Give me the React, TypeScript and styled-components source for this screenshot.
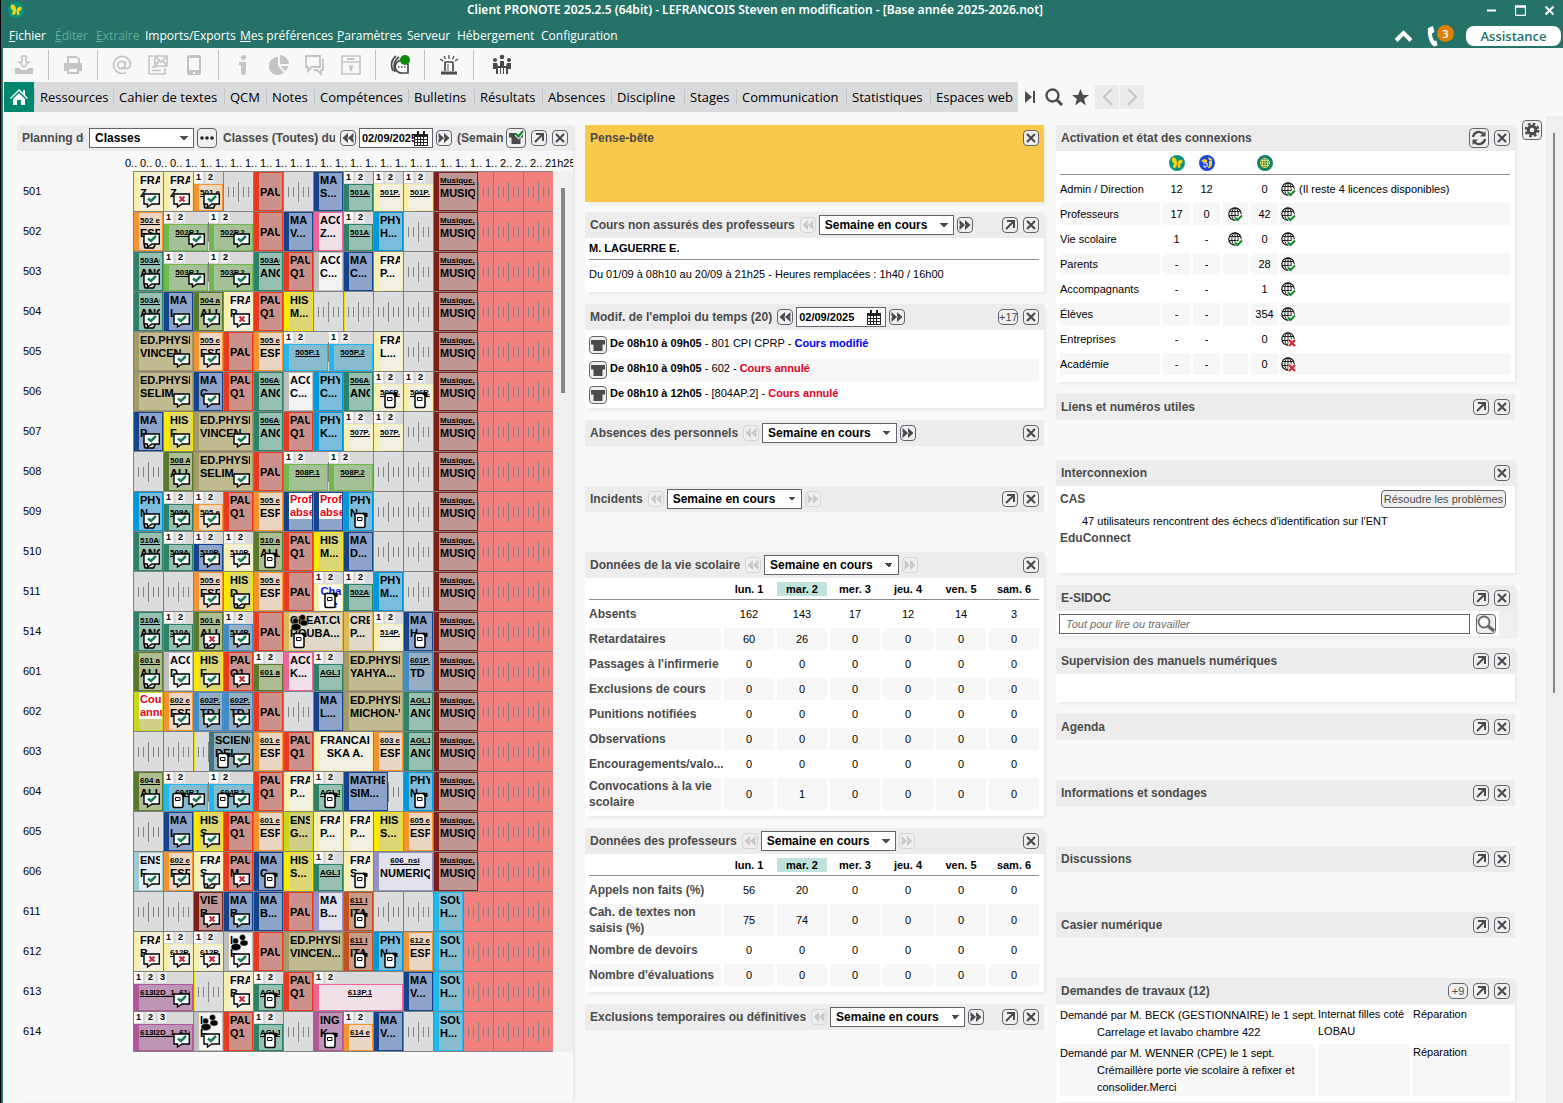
import React from "react";
import styled, { createGlobalStyle, css } from "styled-components";

const SANS = `"Liberation Sans", Arial, sans-serif`;
const UI = `"Open Sans", "Noto Sans", sans-serif`;
const TEAL = "#247268";
const INK = "#4b4b4b";
const OFF = "#c4c4c4";
const EDGE = "#62636d";

const GlobalStyle = createGlobalStyle`
  *, *::before, *::after { box-sizing: border-box; }
  body { margin: 0; border-left: 1px solid #000; background: #f8f8f8; font: 11px/17px ${SANS}; color: #000; }
  button, input, select { font: inherit; color: inherit; margin: 0; }
  button { padding: 0; border: 0; background: none; }
  svg { display: block; flex: none; }
`;

/* ---------- window frame ---------- */

const Frame = styled.div`
  display: flex;
  flex-direction: column;
  min-height: 100vh;
  border-left: 2px solid ${TEAL};
  background: #f8f8f8;
`;
const Banner = styled.header`
  background: ${TEAL};
  color: #fff;
  font-family: ${UI};
`;
const TitleBar = styled.div`
  display: flex;
  align-items: center;
  height: 20px;
  padding: 0 8px 0 5px;
`;
const Title = styled.h1`
  flex: 1;
  margin: 0;
  text-align: center;
  font: 600 12px/20px "Noto Sans", sans-serif;
  white-space: nowrap;
`;
const WindowButtons = styled.div`
  display: flex;
  gap: 18px;
`;
const MenuBar = styled.nav`
  display: flex;
  align-items: center;
  height: 28px;
  padding: 4px 2px 0 6px;
  font-size: 12px;
`;
const MenuItem = styled.button<{ $w: number }>`
  width: ${(p) => p.$w}px;
  text-align: left;
  white-space: nowrap;
  line-height: 20px;
  &:disabled { color: #5fae9d; }
  &::first-letter { text-decoration: underline; }
`;
const PlainItem = styled(MenuItem)`
  &::first-letter { text-decoration: none; }
`;
const BannerRight = styled.div`
  display: flex;
  align-items: center;
  margin-left: auto;
`;
const Phone = styled.div`
  position: relative;
  width: 27px;
  height: 22px;
  margin: 0 12px 0 14px;
`;
const Badge = styled.span`
  position: absolute;
  right: 0;
  top: 0;
  width: 17px;
  height: 17px;
  border-radius: 50%;
  background: #df8000;
  font: 600 11px/17px ${UI};
  text-align: center;
`;
const Assist = styled.button`
  width: 95px;
  height: 20px;
  border-radius: 8px;
  background: #fff;
  color: ${TEAL};
  font: 600 13px/20px ${UI};
`;

const Toolbar = styled.div`
  display: flex;
  align-items: center;
  height: 34px;
`;
const ToolGroup = styled.div`
  display: flex;
  align-items: center;
  gap: 16px;
  height: 30px;
  padding: 0 14px;
  border-left: 1px solid #c4c4c4;
  &:first-child { border: 0; padding-left: 11px; }
  &:last-child { padding-left: 18px; }
`;
const Tool = styled.button`
  width: 20px;
  height: 22px;
  color: ${INK};
  &:disabled { color: ${OFF}; }
`;

const TabLine = styled.div`
  display: flex;
  align-items: center;
  height: 30px;
  padding-left: 1px;
`;
const Tabs = styled.nav`
  display: flex;
  height: 30px;
  background: #d9dadc;
  font: 13px/30px ${UI};
`;
const Home = styled.button`
  display: grid;
  place-items: center;
  width: 30px;
  height: 30px;
  background: #00856f;
  color: #fff;
`;
const Tab = styled.button<{ $w: number }>`
  width: ${(p) => p.$w}px;
  padding-left: 6px;
  text-align: left;
  white-space: nowrap;
  line-height: 30px;
  background: linear-gradient(#c4c4c6, #c4c4c6) left center / 1px 16px no-repeat;
`;
const TabTools = styled.div`
  display: flex;
  align-items: center;
  gap: 9px;
  padding-left: 7px;
  color: ${INK};
`;
const Pager = styled.div`
  display: flex;
  gap: 1px;
  margin-left: -3px;
  button {
    display: grid;
    place-items: center;
    width: 24px;
    height: 24px;
    background: #ebebeb;
    color: ${OFF};
  }
`;

/* ---------- dashboard ---------- */

const Work = styled.div`
  display: flex;
  flex: 1;
`;
const Board = styled.main`
  flex: 1;
  min-width: 0;
  display: grid;
  grid-template-columns: 556px minmax(0, 1fr) minmax(0, 1fr);
  gap: 12px;
  padding: 13px 7px 3px 14px;
`;
const Column = styled.div`
  min-width: 0;
`;
const Widget = styled.section<{ $flat?: boolean }>`
  margin-bottom: 12px;
  &:last-child { margin-bottom: 0; }
  ${(p) => !p.$flat && css`box-shadow: 3px 3px 3px -1px #e9e9e9;`}
`;
const Head = styled.header`
  display: flex;
  align-items: center;
  gap: 3px;
  height: 26px;
  padding: 0 5px;
  background: #ececec;
`;
const HeadTitle = styled.h2<{ $w?: number }>`
  margin: 0 2px 0 0;
  font: bold 12px/17px ${SANS};
  color: ${INK};
  white-space: nowrap;
  overflow: hidden;
  ${(p) => p.$w && css`width: ${p.$w}px;`}
`;
const HeadFill = styled.span`
  flex: 1;
  min-width: 0;
  padding-left: 2px;
  font: bold 12px/17px ${SANS};
  color: ${INK};
  overflow: hidden;
  white-space: nowrap;
`;
const HeadActions = styled.div`
  display: flex;
  align-items: center;
  gap: 5px;
`;
const Square = styled.button<{ $s?: number }>`
  display: grid;
  place-items: center;
  flex: none;
  width: ${(p) => p.$s || 16}px;
  height: ${(p) => p.$s || 16}px;
  border: 1px solid ${EDGE};
  border-radius: 4px;
  background: #efefef;
  color: ${INK};
  &:disabled { border-color: #d5d5d5; color: #c8c8c8; }
`;
const Counter = styled.button`
  height: 16px;
  width: 20px;
  border: 1px solid ${EDGE};
  border-radius: 5px;
  background: #efefef;
  color: ${INK};
  font: 11px/14px ${SANS};
`;
const Field = styled.div<{ $w: number }>`
  display: flex;
  align-items: center;
  flex: none;
  width: ${(p) => p.$w}px;
  height: 20px;
  padding-right: 4px;
  border: 1px solid ${EDGE};
  background: #fff;
`;
const DateBox = styled.input`
  flex: 1;
  min-width: 0;
  height: 18px;
  padding: 0 0 0 2px;
  border: 0;
  background: none;
  font: bold 11px/18px ${SANS};
  outline: 0;
`;
const Picker = styled.select<{ $w: number }>`
  appearance: none;
  flex: none;
  width: ${(p) => p.$w}px;
  height: 20px;
  padding: 0 0 0 5px;
  border: 1px solid ${EDGE};
  border-radius: 0;
  font: bold 12px/18px ${SANS};
  background:
    linear-gradient(to top right, transparent 50%, ${INK} 50%) right 9px center / 4px 4px no-repeat,
    linear-gradient(to top left, transparent 50%, ${INK} 50%) right 5px center / 4px 4px no-repeat,
    #fff;
  background-position: right 9px center, right 5px center, 0 0;
`;
const Body = styled.div<{ $h?: number; $clear?: boolean }>`
  background: ${(p) => (p.$clear ? "transparent" : "#fff")};
  padding: 0 5px 0 4px;
  ${(p) => p.$h && css`min-height: ${p.$h}px;`}
`;
const Note = styled(Widget)`
  min-height: 77px;
  margin-bottom: 10px;
  background: #f9ca4a;
  ${Head} { background: none; }
`;
const Teacher = styled.h3`
  margin: 0;
  font: bold 11px/21px ${SANS};
  border-bottom: 1px solid #8c8c8c;
`;
const Line = styled.p`
  margin: 0;
  line-height: 29px;
`;
const Changes = styled.ul`
  list-style: none;
  margin: 0;
  padding: 1px 0 0;
  li {
    display: flex;
    align-items: center;
    gap: 3px;
    height: 25px;
    padding-top: 3px;
    > span { flex: 1; height: 22px; line-height: 18px; }
  }
  li:nth-child(even) > span { background: #f7f7f7; }
`;
const Status = styled.b<{ $c: string }>`
  color: ${(p) => p.$c};
`;

const Table = styled.table`
  width: 100%;
  table-layout: fixed;
  border-collapse: separate;
  border-spacing: 0;
  th, td {
    padding: 0;
    text-align: center;
    border: 0 solid transparent;
    background-clip: padding-box;
  }
  thead th { border-bottom: 1px solid #8c8c8c; font-size: 11px; }
  tbody th, tbody td { height: 25px; border-width: 3px 3px 0 0; line-height: 16px; }
  tbody td:last-child { border-right-width: 0; }
  tbody th { text-align: left; }
  tbody tr:nth-child(even) > * { background-color: #f7f7f7; }
  svg { margin: 0 auto; }
`;
const Day = styled.span<{ $on: boolean }>`
  display: block;
  margin-right: 3px;
  line-height: 14px;
  background: ${(p) => (p.$on ? "#bfe3dc" : "transparent")};
`;
const DataTable = styled(Table)`
  thead th { height: 22px; }
  thead th:first-child { width: 135px; }
  thead th:last-child { width: 50px; }
  thead th:last-child ${Day} { margin-right: 0; }
  tbody th { font-size: 12px; color: ${INK}; }
`;
const StateTable = styled(Table)`
  thead th { height: 24px; padding-right: 3px; }
  tbody th { font-weight: normal; }
  tbody td:last-child { text-align: left; }
`;
const Inline = styled.span`
  display: flex;
  align-items: center;
  gap: 3px;
  white-space: nowrap;
  svg { margin: 0; }
`;
const JobTable = styled(Table)`
  margin-top: 2px;
  tbody td { vertical-align: top; text-align: left; line-height: 17px; border-width: 0 3px 3px 0; }
  tbody td:first-child { padding-top: 1px; white-space: nowrap; }
  tbody td p { margin: 0; padding-left: 37px; white-space: normal; }
`;
const Cas = styled.div`
  display: flex;
  align-items: center;
  justify-content: space-between;
  padding: 4px 4px 0 0;
  color: ${INK};
  b { font-size: 12px; }
`;
const Solve = styled.button`
  height: 18px;
  padding: 0 2px;
  border: 1px solid ${EDGE};
  border-radius: 4px;
  background: #efefef;
  color: ${INK};
`;
const Detail = styled.p`
  margin: 5px 0 0 22px;
`;
const Group = styled.b`
  display: block;
  color: ${INK};
  font-size: 12px;
`;
const SearchRow = styled.form`
  display: flex;
  align-items: center;
  gap: 6px;
  height: 25px;
  padding: 0 19px 0 3px;
  background: linear-gradient(#efefef, #efefef) right / 16px 100% no-repeat #fff;
`;
const SearchBox = styled.input`
  flex: 1;
  min-width: 0;
  height: 20px;
  padding: 0 6px;
  border: 1px solid ${EDGE};
  background: #fff;
  font: italic 11px/18px ${SANS};
  &::placeholder { color: #6b6b6b; opacity: 1; }
`;
const Settings = styled.aside`
  padding: 8px 4px 0 0;
`;
const Track = styled.div`
  width: 17px;
  margin-top: 4px;
  padding: 17px 0 0 7px;
  background: #eee;
`;
const Thumb = styled.div<{ $w: number; $h: number }>`
  width: ${(p) => p.$w}px;
  height: ${(p) => p.$h}px;
  background: #868686;
`;

/* ---------- timetable ---------- */

const Planning = styled.section`
  box-shadow: 3px 0 3px -1px #e6e6e6;
`;
const Hours = styled.div`
  display: flex;
  height: 20px;
  padding: 4px 0 0 108px;
  line-height: 17px;
  overflow: hidden;
  span { flex: none; width: 15px; white-space: nowrap; }
`;
const Sheet = styled.div`
  display: flex;
`;
const Names = styled.div`
  width: 116px;
  padding-left: 6px;
  line-height: 40px;
`;
const Lanes = styled.div`
  width: 420px;
  border-bottom: 1px solid #828282;
`;
const SideTrack = styled.div`
  flex: 1;
  padding: 17px 0 0 8px;
  background: #efefef;
`;
const tick = (x: number, tall?: boolean) =>
  `linear-gradient(#828282, #828282) ${x}px ${tall ? 10 : 15}px / 1px ${tall ? 20 : 10}px no-repeat`;
const Slot = styled.div<{ $late: boolean; $mark: boolean }>`
  grid-row: 1;
  border-left: 1px solid #828282;
  background: ${[4, 9, 19, 24].map((x) => tick(x)).join(",")}, ${tick(14, true)},
    ${(p) => (p.$mark ? "linear-gradient(90deg, #f5d800 1px, transparent 1px)," : "")}
    ${(p) => (p.$late ? "#f2807e" : "#dbdcde")};
`;
const Lane = styled.div`
  display: grid;
  grid-template-columns: repeat(28, 15px);
  grid-template-rows: 39px;
  border-top: 1px solid #828282;
`;
const Place = styled.div<{ $from: number; $span: number; $tagged: boolean }>`
  grid-row: 1;
  grid-column: ${(p) => p.$from * 2 + 1} / span ${(p) => p.$span * 2};
  display: flex;
  flex-direction: column;
  position: relative;
  min-width: 0;
  margin-left: 1px;
  ${(p) => p.$tagged && css`background: #d9d9d9;`}
`;
const Tags = styled.div`
  display: flex;
  gap: 3px;
  height: 12px;
  padding-bottom: 1px;
  span {
    width: 9px;
    background: #ececec;
    font: bold 9px/11px ${SANS};
    text-align: center;
  }
  span:first-child { background: #fff; }
`;
const Lesson = styled.div<{ $edge: string; $fill: string; $center: boolean; $mid: boolean; $note?: string }>`
  flex: 1;
  min-height: 0;
  display: flex;
  flex-direction: column;
  justify-content: ${(p) => (p.$mid ? "center" : "flex-start")};
  padding: 1px 2px 0 1px;
  border: 1px solid ${(p) => p.$edge};
  border-left-width: 5px;
  background: ${(p) => p.$fill};
  font: bold 11px/13px ${SANS};
  text-align: ${(p) => (p.$center ? "center" : "left")};
  overflow: hidden;
  ${(p) => p.$note && css`
    padding: 0;
    color: ${p.$note};
    div { background: #fff; padding-left: 1px; }
  `}
`;
const Row = styled.div<{ $code: boolean }>`
  flex: none;
  overflow: hidden;
  white-space: nowrap;
  ${(p) => p.$code && css`font-size: 8px; text-decoration: underline;`}
`;
const Marks = styled.div<{ $left: boolean }>`
  position: absolute;
  bottom: 2px;
  display: flex;
  ${(p) => (p.$left ? css`left: 9px;` : css`right: 3px;`)}
`;
const Crowd = styled.div`
  position: absolute;
  left: 6px;
  top: 2px;
`;

/* ---------- drawings ---------- */

const Cross = () => (
  <svg width="12" height="12" viewBox="0 0 12 12" stroke="currentColor" strokeWidth="2.2"><path d="M2 2l8 8M10 2l-8 8" /></svg>
);
const Out = () => (
  <svg width="12" height="12" viewBox="0 0 12 12" fill="none" stroke="currentColor" strokeWidth="2"><path d="M3 2h7v7M9.500 2.500L2 10" /></svg>
);
const Double = ({ back }: { back?: boolean }) => (
  <svg width="12" height="12" viewBox="0 0 12 12" fill="currentColor">
    {back
      ? <path d="M6 1v4L5 6l1 1v4L.5 6zM11.500 1v4l-1 1 1 1v4L6 6z" />
      : <path d="M6 1v4l1 1-1 1v4l5.500-5zM.5 1v4l1 1-1 1v4L6 6z" />}
  </svg>
);
const Calendar = () => (
  <svg width="14" height="15" viewBox="0 0 14 15" shapeRendering="crispEdges"><path d="M0 3h14v12H0z" fill="#222" />
    <path d="M3 0h2v3H3zM9 0h2v3H9z" fill="#222" />
    <path d="M1 6h2v2H1zM4 6h2v2H4zM7 6h2v2H7zM10 6h3v2h-3zM1 9h2v2H1zM4 9h2v2H4zM7 9h2v2H7zM10 9h3v2h-3zM1 12h2v2H1zM4 12h2v2H4zM7 12h2v2H7zM10 12h3v2h-3z" fill="#fff" /></svg>
);
const Shirt = ({ ok }: { ok?: boolean }) => (
  <svg width="16" height="16" viewBox="0 0 16 16"><path d="M1 3h14v4.500h-2.500V14h-9V7.500H1z" fill={INK} />
    {ok && <path d="M8 4l2.500 2.500L15 1" fill="none" stroke="#efefef" strokeWidth="4" />}
    {ok && <path d="M8 4l2.500 2.500L15 1" fill="none" stroke="#0b8a1e" strokeWidth="2" />}</svg>
);
const Refresh = () => (
  <svg width="16" height="16" viewBox="0 0 16 16" fill="none" stroke={INK} strokeWidth="2.200">
    <path d="M2 7a6 6 0 0 1 10.500-3M14 9a6 6 0 0 1-10.500 3" /><path d="M14.500 1v5.500H9zM1.500 15V9.500H7z" fill={INK} stroke="none" /></svg>
);
const Gear = () => (
  <svg width="16" height="16" viewBox="0 0 16 16" fill="none" stroke={INK}>
    <circle cx="8" cy="8" r="3.800" strokeWidth="3" /><circle cx="8" cy="8" r="6.200" strokeWidth="2.400" strokeDasharray="2.600 2.270" /></svg>
);
const Butterfly = () => (
  <svg width="16" height="16" viewBox="0 0 16 16"><circle cx="8" cy="8" r="8" fill="#0a9480" />
    <path d="M3.500 2.500C6 2 8 4 8 7.500c0 3-.5 5.500-2.500 5.500S4 10 5.500 8.500C3 8 2 4 3.500 2.500zM8.500 8C9 5.500 11.500 4 13 5c1.500 1.500 0 4-2.500 4.500C12 10 12 12.500 10.500 13S8.500 11 8.500 8z" fill="#f7d50c" /></svg>
);
const BlueMark = () => (
  <svg width="16" height="16" viewBox="0 0 16 16"><circle cx="8" cy="8" r="8" fill="#1c46dd" />
    <path d="M2 6l3-2 3 1v2H4zM9 2l4 2v2l-3-1zM10 6h3v4l-2 3h-2l1-3z" fill="#f7d50c" /><path d="M4 8h4v4M4 11h2v2" stroke="#fff" fill="none" /></svg>
);
const NetMark = () => (
  <svg width="16" height="16" viewBox="0 0 16 16"><circle cx="8" cy="8" r="8" fill="#12836b" />
    <path d="M8 3.500v9M5.500 4v8M10.500 4v8M3.500 8h9M4 5.500h8M4 10.500h8" stroke="#f0dc5a" strokeWidth=".9" /><circle cx="8" cy="8" r="4.500" fill="none" stroke="#f0dc5a" /></svg>
);
const Globe = ({ ok }: { ok: boolean }) => (
  <svg width="15" height="15" viewBox="0 0 15 15" fill="none" stroke="#111">
    <circle cx="7" cy="7" r="6.200" strokeWidth="1.200" /><ellipse cx="7" cy="7" rx="3.200" ry="6" strokeWidth=".9" /><path d="M7 1v12M1.500 4.500h11M1 8.500h12" strokeWidth=".9" />
    {ok
      ? <><path d="M7 10l2.500 2.500L14 8" stroke="#fff" strokeWidth="4" /><path d="M7 10.500l2.500 2.500L14 8.500" stroke="#0b8a1e" strokeWidth="2" /></>
      : <><path d="M8 8l6 6M14 8l-6 6" stroke="#fff" strokeWidth="4" /><path d="M8 8l6 6M14 8l-6 6" stroke="#d8232a" strokeWidth="2.200" /></>}
  </svg>
);
const Bubble = ({ kind }: { kind: string }) => (
  <svg width="17" height="18" viewBox="0 0 17 18">
    {kind.includes("stack") && <path d="M1.500 9v7q0 1 1 1h8l1.500-3" fill="#ddd" stroke="#000" strokeWidth="1.600" />}
    <path d="M1 3h15.300v10H9l-4.500 3v-3H1z" fill="#fff" stroke="#000" strokeWidth="1.400" />
    {kind.includes("cross")
      ? <path d="M6.500 5.500l5 5M11.500 5.500l-5 5" stroke="#c03545" strokeWidth="2.400" />
      : <path d="M5 7.500l3 2.500 5-5" fill="none" stroke="#1d7d57" strokeWidth="2.600" />}
  </svg>
);
const CardMark = () => (
  <svg width="16" height="18" viewBox="0 0 16 18">
    <rect x="1" y="2.500" width="10" height="14" rx="1.500" fill="#fff" stroke="#000" strokeWidth="1.500" />
    <path d="M9 1.500l4.500.5v4h-2L9 3.500z" fill="#000" />
    <path d="M3.500 6.500h4.500v3H3.500z" fill="#fff" stroke="#000" /></svg>
);
const PeopleMark = () => (
  <svg width="18" height="17" viewBox="0 0 18 17"><g fill="#000" stroke="#eee" strokeWidth=".4">
    <circle cx="12.500" cy="3.500" r="3" /><ellipse cx="14" cy="9" rx="4" ry="3" /><circle cx="5.500" cy="7" r="3" /><ellipse cx="6" cy="13" rx="5" ry="3.400" /></g></svg>
);

const TOOL_ART: Record<string, React.ReactNode> = {
  save: <><path d="M8 2h4v6h3l-5 5-5-5h3z" fill="none" stroke="currentColor" strokeWidth="1.500" /><path d="M1 14h4l2 2h6l2-2h4v6H1z" fill="currentColor" /></>,
  print: <><path d="M5 9V3h8l3 2v4" fill="none" stroke="currentColor" strokeWidth="2" /><path d="M1 9h18v8h-3v-3H4v3H1z" fill="currentColor" /><path d="M5 14h10v5H5z" fill="none" stroke="currentColor" strokeWidth="2" /></>,
  at: <g fill="none" stroke="currentColor" strokeWidth="1.700"><circle cx="9.500" cy="11" r="3.600" /><path d="M13.500 7l-1 6c0 3 6 2 6-3A8.500 8.500 0 1 0 14 18.500" /></g>,
  mail: <g fill="none" stroke="currentColor" strokeWidth="1.600"><path d="M5 2H1v18h16v-6M7 2h12v10H7zM7 2l6 6 6-6M7 12l4-5M19 12l-4-5M4 13h4M4 16.500h9" /></g>,
  phone: <path fillRule="evenodd" fill="currentColor" d="M5 1h10q2 0 2 2v16q0 2-2 2H5q-2 0-2-2V3q0-2 2-2zM5 4v12h10V4zM9 18v2h2v-2z" />,
  info: <path d="M10.500 1a2.500 2.500 0 1 1 0 5 2.500 2.500 0 0 1 0-5zM6 8h7v10q0 3-2.500 3T8 18v-7H6z" fill="currentColor" />,
  pie: <path d="M9 3v9l6 6.500A9 9 0 1 1 9 3zM11 1a9 9 0 0 1 9 9h-9zM11.500 12h8l-3 5.500z" fill="currentColor" />,
  chat: <g fill="none" stroke="currentColor" strokeWidth="1.800"><path d="M1 2h14v11H7l-4 4v-4H1z" /><path d="M18 5v11h-2v4l-4-4H9" /></g>,
  box: <g fill="none" stroke="currentColor" strokeWidth="1.600"><path d="M1 2h18v18H1zM1 8h18" /><path d="M6 5h8M10 12v5M8 12.500h4" strokeWidth="2.200" /></g>,
  talk: <g fill="none" stroke={INK} strokeWidth="1.700"><path d="M6 2Q-1 8 3 17M9 3Q2 8 5 18" /><path d="M18 11v8h-5a6.500 6.500 0 1 1 5-8z" fill="#fff" /><path d="M8 13h1.500M11 13h1.500M14 13h1.500" /><circle cx="15" cy="6" r="5" fill="#0b8a0b" stroke="none" /></g>,
  alarm: <g fill="none" stroke={INK} strokeWidth="1.700"><path d="M6 17V9q0-1 1-1h6q1 0 1 1v8" /><path d="M8 10h2v7H8z" fill="#aaa" stroke="none" /><path d="M2 19h16" strokeWidth="3" /><path d="M10 1v4M5 2l1.500 3M15 2l-1.500 3M1 5l3 2M19 5l-3 2" strokeWidth="1.300" /></g>,
  meet: <g fill={INK}><circle cx="10" cy="3" r="2.300" /><circle cx="3" cy="6" r="2" /><circle cx="17" cy="6" r="2" /><path d="M1 9h4l1 3h2V7h4v5h2l1-3h4v6h-3v5h-2v-6h-2v6h-1v-6h-2v6H8v-6H6v6H4v-5H1z" /></g>,
};

/* ---------- data ---------- */

const TONES: Record<string, [string, string]> = {
  cream: ["#f7efb0", "#f1efe2"], orange: ["#f59331", "#ead6c3"], green: ["#6fb84c", "#a4c096"],
  teal: ["#2c8168", "#97bfb2"], blue: ["#14438f", "#8ea3c8"], olive: ["#587a2e", "#afbd94"],
  khaki: ["#a49c68", "#c0bb93"], red: ["#e83a1e", "#cb918a"], yellow: ["#fbea00", "#dcd676"],
  cyan: ["#20b8ef", "#87bbce"], pink: ["#f06599", "#f0e1e9"], sky: ["#0097db", "#7bbcdc"],
  grey: ["#c0bfbf", "#f3f3f3"], lilac: ["#9491c8", "#e2e2ed"], wine: ["#7f1f1a", "#bf9794"],
  purple: ["#b0579b", "#bd95b5"], rust: ["#c8501e", "#c79d89"], sand: ["#dcb95b", "#dfd9c9"],
  steel: ["#3f8cc9", "#97adc2"], slate: ["#3f7587", "#95b0bb"], lime: ["#c8d719", "#cfcf8a"],
  ice: ["#9ccbd4", "#e4edef"],
};

/* from column, columns taken, tone, lines ("_" marks an underlined group code), flags */
type Item = [number, number, string, string, string?];
const MUS: Item = [10, 1.5, "wine", "_Musique,|MUSIQ"];
const SOU: Item = [10, 1, "cyan", "SOU|H..."];
const PLAN: [string, Item[]][] = [
  ["501", [[0, 1, "cream", "FRA|Z", "check"], [1, 1, "cream", "FRA|Z", "cross"], [2, 1, "orange", "_501 e", "tag stack"], [4, 1, "red", "PAU"], [6, 1, "blue", "MA|S..."], [7, 1, "teal", "_501AG", "tag"], [8, 1, "cream", "_501P.", "tag"], [9, 1, "cream", "_501P.", "tag"], MUS]],
  ["502", [[0, 1, "orange", "_502 e|ESP", "stack"], [1, 1.5, "green", "_502P.1", "tag center check"], [2.5, 1.5, "green", "_502P.2", "tag center check"], [4, 1, "red", "PAU"], [5, 1, "blue", "MA|V..."], [6, 1, "pink", "ACC|Z..."], [7, 1, "teal", "_501AG", "tag"], [8, 1, "sky", "PHY|H..."], MUS]],
  ["503", [[0, 1, "teal", "_503AG|ANG", "stack"], [1, 1.5, "green", "_503P.1", "tag center check"], [2.5, 1.5, "green", "_503P.2", "tag center check"], [4, 1, "teal", "_503AG|ANG"], [5, 1, "red", "PAU|Q1"], [6, 1, "grey", "ACC|C..."], [7, 1, "blue", "MA|C..."], [8, 1, "cream", "FRA|P..."], MUS]],
  ["504", [[0, 1, "teal", "_503AG|ANG", "stack"], [1, 1, "blue", "MA|L", "check"], [2, 1, "olive", "_504 a|ALL", "check"], [3, 1, "cream", "FRA|P", "cross"], [4, 1, "red", "PAU|Q1"], [5, 1, "yellow", "HIS|M..."], MUS]],
  ["505", [[0, 2, "khaki", "ED.PHYSI|VINCEN", "check"], [2, 1, "orange", "_505 e|ESP", "check"], [3, 1, "red", "PAU"], [4, 1, "orange", "_505 e|ESP"], [5, 1.5, "cyan", "_505P.1", "tag center"], [6.5, 1.5, "cyan", "_505P.2", "tag center"], [8, 1, "cream", "FRA|L..."], MUS]],
  ["506", [[0, 2, "khaki", "ED.PHYSI|SELIM", "check"], [2, 1, "blue", "MA|C", "check"], [3, 1, "red", "PAU|Q1"], [4, 1, "teal", "_506AG|ANG"], [5, 1, "grey", "ACC|C..."], [6, 1, "sky", "PHY|C..."], [7, 1, "teal", "_506AG|ANG"], [8, 1, "cream", "_506P.", "tag card"], [9, 1, "cream", "_506P.", "tag card"], MUS]],
  ["507", [[0, 1, "blue", "MA|P", "stack"], [1, 1, "yellow", "HIS|F", "check"], [2, 2, "khaki", "ED.PHYSI|VINCEN", "check"], [4, 1, "teal", "_506AG|ANG"], [5, 1, "red", "PAU|Q1"], [6, 1, "sky", "PHY|K..."], [7, 1, "cream", "_507P.", "tag"], [8, 1, "cream", "_507P.", "tag"], MUS]],
  ["508", [[1, 1, "olive", "_508 A|ALL", "check"], [2, 2, "khaki", "ED.PHYSI|SELIM", "check"], [4, 1, "red", "PAU"], [5, 1.5, "green", "_508P.1", "tag center"], [6.5, 1.5, "green", "_508P.2", "tag center"], MUS]],
  ["509", [[0, 1, "sky", "PHY|N", "stack"], [1, 1, "teal", "_509AG", "tag check"], [2, 1, "orange", "_505 e", "tag check"], [3, 1, "red", "PAU|Q1"], [4, 1, "orange", "_505 e|ESP"], [5, 1, "blue", "Prof|absent", "alert"], [6, 1, "blue", "Prof|absent", "alert"], [7, 1, "sky", "PHY|N", "card"], MUS]],
  ["510", [[0, 1, "teal", "_510AG|ANG", "stack"], [1, 1, "teal", "_509AG", "tag check"], [2, 1, "blue", "_510P.", "tag check"], [3, 1, "cream", "_510P.", "tag check"], [4, 1, "olive", "_510 a|ALL", "card"], [5, 1, "red", "PAU|Q1"], [6, 1, "yellow", "HIS|M..."], [7, 1, "blue", "MA|D..."], MUS]],
  ["511", [[2, 1, "orange", "_505 e|ESP", "check"], [3, 1, "yellow", "HIS|D", "stack"], [4, 1, "orange", "_505 e|ESP"], [5, 1, "red", "PAU"], [6, 1, "cream", "Cha|de", "tag info center card"], [7, 1, "teal", "_502AG", "tag"], [8, 1, "sky", "PHY|M..."], MUS]],
  ["514", [[0, 1, "teal", "_510AG|ANG", "stack"], [1, 1, "teal", "_510AG", "tag check"], [2, 1, "olive", "_501 a|ALL", "stack cross"], [3, 1, "steel", "_514P.", "tag check"], [4, 1, "red", "PAU"], [5, 2, "sand", "CREAT.CU|ROUBA...", "people card left"], [7, 1, "sand", "CREA|P..."], [8, 1, "cream", "_514P.", "tag"], [9, 1, "blue", "MA|H", "card"], MUS]],
  ["601", [[0, 1, "olive", "_601 a|ALL", "stack"], [1, 1, "grey", "ACC|D", "check"], [2, 1, "yellow", "HIS|F", "check"], [3, 1, "red", "PAU|Q1", "cross"], [4, 1, "olive", "_601 a", "tag"], [5, 1, "pink", "ACC|K..."], [6, 1, "teal", "_AGL1", "tag"], [7, 2, "khaki", "ED.PHYSI|YAHYA..."], [9, 1, "steel", "_601P.|TD"], MUS]],
  ["602", [[0, 1, "lime", "Cours|annulé", "alert"], [1, 1, "orange", "_602 e|ESP", "check"], [2, 1, "steel", "_602P.|TD P", "check"], [3, 1, "steel", "_602P.|TD P", "check"], [4, 1, "red", "PAU"], [6, 1, "blue", "MA|L..."], [7, 2, "khaki", "ED.PHYSI|MICHON-V"], [9, 1, "teal", "_AGL1|ANG"], MUS]],
  ["603", [[2.5, 1.5, "slate", "SCIENC|DEL", "card check"], [4, 1, "orange", "_601 e|ESP"], [5, 1, "red", "PAU|Q1"], [6, 2, "cream", "FRANCAI|SKA A.", "center"], [8, 1, "orange", "_603 e|ESP"], [9, 1, "teal", "_AGL1|ANG"], MUS]],
  ["604", [[0, 1, "olive", "_604 a|ALL", "check"], [1, 1.5, "cyan", "_604P.1", "tag center card check"], [2.5, 1.5, "cyan", "_604P.2", "tag center card check"], [4, 1, "red", "PAU|Q1"], [5, 1, "cream", "FRA|P..."], [6, 1, "teal", "_AGL1", "tag card"], [7, 1.5, "blue", "MATHE|SIM..."], [9, 1, "sky", "PHY|N", "card"], MUS]],
  ["605", [[1, 1, "blue", "MA|L", "check"], [2, 1, "yellow", "HIS|S", "check"], [3, 1, "red", "PAU|Q1"], [4, 1, "orange", "_601 e|ESP"], [5, 1, "lime", "ENS|G..."], [6, 1, "cream", "FRA|P..."], [7, 1, "cream", "FRA|P..."], [8, 1, "yellow", "HIS|S..."], [9, 1, "orange", "_605 e|ESP"], MUS]],
  ["606", [[0, 1, "ice", "ENS|F", "check"], [1, 1, "orange", "_602 e|ESP", "check"], [2, 1, "cream", "FRA|S", "stack"], [3, 1, "red", "PAU|M", "cross"], [4, 1, "blue", "MA|C...", "card"], [5, 1, "yellow", "HIS|S..."], [6, 1, "teal", "_AGL1", "tag"], [7, 1, "cream", "FRA|S", "card"], [8, 2, "lilac", "_606_nsi|NUMERIQ", "center"], MUS]],
  ["611", [[2, 1, "wine", "VIE|B", "cross"], [3, 1, "blue", "MA|B", "check"], [4, 1, "blue", "MA|B..."], [5, 1, "red", "PAU"], [6, 1, "lilac", "MA|B..."], [7, 1, "rust", "_611 I|ITA", "card"], SOU]],
  ["612", [[0, 1, "cream", "FRA|B", "cross"], [1, 1, "cream", "_612P.", "tag cross"], [2, 1, "cream", "_612P.", "tag cross"], [3, 1, "grey", "I|E", "people check"], [4, 1, "red", "PAU"], [5, 2, "khaki", "ED.PHYSI|VINCEN..."], [7, 1, "rust", "_611 I|ITA", "card"], [8, 1, "sky", "PHY|N", "card"], [9, 1, "orange", "_612 e|ESP"], SOU]],
  ["613", [[0, 2, "purple", "_613I2D_1, 614", "tag three check"], [3, 1, "cream", "FRA|B", "cross"], [4, 1, "teal", "_AGL1", "tag card"], [5, 1, "red", "PAU|Q1"], [6, 3, "pink", "_613P.1", "tag center"], [9, 1, "blue", "MA|V..."], SOU]],
  ["614", [[0, 2, "purple", "_613I2D_1, 614", "tag three check"], [2, 1, "grey", "I|E", "people check"], [3, 1, "red", "PAU|Q1"], [4, 1, "teal", "_AGL1", "tag card"], [6, 1, "purple", "ING|K...", "card"], [7, 1, "orange", "_614 e", "tag"], [8, 1, "blue", "MA|V..."], SOU]],
];

const HOURS = [..."0000", ..."1".repeat(21), ..."222"].map((h) => h + "..").concat("21h25");
const SLOTS = Array.from({ length: 14 }, (_, i) => i);

const DAYS = ["lun. 1", "mar. 2", "mer. 3", "jeu. 4", "ven. 5", "sam. 6"];
const LIFE: [string, number[]][] = [
  ["Absents", [162, 143, 17, 12, 14, 3]],
  ["Retardataires", [60, 26, 0, 0, 0, 0]],
  ["Passages à l'infirmerie", [0, 0, 0, 0, 0, 0]],
  ["Exclusions de cours", [0, 0, 0, 0, 0, 0]],
  ["Punitions notifiées", [0, 0, 0, 0, 0, 0]],
  ["Observations", [0, 0, 0, 0, 0, 0]],
  ["Encouragements/valo...", [0, 0, 0, 0, 0, 0]],
  ["Convocations à la vie scolaire", [0, 1, 0, 0, 0, 0]],
];
const STAFF: [string, number[]][] = [
  ["Appels non faits (%)", [56, 20, 0, 0, 0, 0]],
  ["Cah. de textes non saisis (%)", [75, 74, 0, 0, 0, 0]],
  ["Nombre de devoirs", [0, 0, 0, 0, 0, 0]],
  ["Nombre d'évaluations", [0, 0, 0, 0, 0, 0]],
];
const LINKS: { name: string; a: string; b: string; mid?: boolean; n: string; ok: boolean; note?: string }[] = [
  { name: "Admin / Direction", a: "12", b: "12", n: "0", ok: true, note: "(Il reste 4 licences disponibles)" },
  { name: "Professeurs", a: "17", b: "0", mid: true, n: "42", ok: true },
  { name: "Vie scolaire", a: "1", b: "-", mid: true, n: "0", ok: true },
  { name: "Parents", a: "-", b: "-", n: "28", ok: true },
  { name: "Accompagnants", a: "-", b: "-", n: "1", ok: true },
  { name: "Élèves", a: "-", b: "-", n: "354", ok: true },
  { name: "Entreprises", a: "-", b: "-", n: "0", ok: false },
  { name: "Académie", a: "-", b: "-", n: "0", ok: false },
];
const MENU: [string, number, string?][] = [
  ["Fichier", 46], ["Éditer", 41, "off"], ["Extraire", 49, "off"], ["Imports/Exports", 95, "plain"],
  ["Mes préférences", 97], ["Paramètres", 70], ["Serveur", 50, "plain"], ["Hébergement", 84, "plain"], ["Configuration", 80, "plain"],
];
const TABS: [string, number][] = [
  ["Ressources", 79], ["Cahier de textes", 111], ["QCM", 42], ["Notes", 48], ["Compétences", 94], ["Bulletins", 66],
  ["Résultats", 68], ["Absences", 69], ["Discipline", 73], ["Stages", 52], ["Communication", 110], ["Statistiques", 84], ["Espaces web", 88],
];
const TOOLS = [["save"], ["print"], ["at", "mail", "phone"], ["info", "pie", "chat", "box"], ["talk"], ["alarm"], ["meet"]];

/* ---------- parts ---------- */

function Actions({ count, open }: { count?: string; open?: boolean }) {
  return (
    <HeadActions>
      {count && <Counter>{count}</Counter>}
      {open && <Square aria-label="Ouvrir"><Out /></Square>}
      <Square aria-label="Fermer"><Cross /></Square>
    </HeadActions>
  );
}

function WeekPicker({ label, next }: { label: string; next?: boolean }) {
  return (
    <>
      <Square disabled aria-label="Semaine précédente"><Double back /></Square>
      <Picker $w={135} aria-label={label}><option>Semaine en cours</option></Picker>
      <Square disabled={!next} aria-label="Semaine suivante"><Double /></Square>
    </>
  );
}

function DatePicker({ width }: { width: number }) {
  return (
    <>
      <Square aria-label="Jour précédent"><Double back /></Square>
      <Field $w={width}><DateBox aria-label="Date" defaultValue="02/09/2025" /><Calendar /></Field>
      <Square aria-label="Jour suivant"><Double /></Square>
    </>
  );
}

function WeekTable({ rows }: { rows: [string, number[]][] }) {
  return (
    <DataTable>
      <thead>
        <tr><th />{DAYS.map((d, i) => <th key={d} scope="col"><Day $on={i === 1}>{d}</Day></th>)}</tr>
      </thead>
      <tbody>
        {rows.map(([name, values]) => (
          <tr key={name}><th scope="row">{name}</th>{values.map((v, i) => <td key={i}>{v}</td>)}</tr>
        ))}
      </tbody>
    </DataTable>
  );
}

function LessonCell({ item }: { item: Item }) {
  const [from, span, tone, text, flags = ""] = item;
  const has = (f: string) => flags.includes(f);
  const lines = text.split("|");
  const bubble = has("check") || has("cross") || has("stack");
  return (
    <Place $from={from} $span={span} $tagged={has("tag")}>
      {has("tag") && <Tags><span>1</span><span>2</span>{has("three") && <span>3</span>}</Tags>}
      <Lesson
        $edge={TONES[tone][0]}
        $fill={TONES[tone][1]}
        $center={has("center")}
        $mid={text === "PAU"}
        $note={has("alert") ? "#f00014" : has("info") ? "#1010f0" : undefined}
      >
        {lines.map((l, i) => <Row key={i} $code={l[0] === "_"}>{l.replace(/^_/, "")}</Row>)}
      </Lesson>
      {has("people") && <Crowd><PeopleMark /></Crowd>}
      {(bubble || has("card")) && (
        <Marks $left={has("left")}>{has("card") && <CardMark />}{bubble && <Bubble kind={flags} />}</Marks>
      )}
    </Place>
  );
}

function PlanningWidget() {
  return (
    <Planning>
      <Head>
        <HeadTitle $w={62}>Planning de</HeadTitle>
        <Picker $w={105} aria-label="Planning de"><option>Classes</option></Picker>
        <Square $s={20} aria-label="Choisir">
          <svg width="14" height="4" viewBox="0 0 14 4" fill="#222"><circle cx="2" cy="2" r="1.800" /><circle cx="7" cy="2" r="1.800" /><circle cx="12" cy="2" r="1.800" /></svg>
        </Square>
        <span />
        <HeadTitle $w={112}>Classes (Toutes) du</HeadTitle>
        <DatePicker width={74} />
        <HeadFill>(Semaine 1)</HeadFill>
        <HeadActions>
          <Square $s={20} aria-label="Modifications"><Shirt ok /></Square>
          <Square aria-label="Ouvrir"><Out /></Square>
          <Square aria-label="Fermer"><Cross /></Square>
        </HeadActions>
      </Head>
      <Hours>{HOURS.map((h, i) => <span key={i}>{h}</span>)}</Hours>
      <Sheet>
        <Names>{PLAN.map(([name]) => <div key={name}>{name}</div>)}</Names>
        <Lanes>
          {PLAN.map(([name, items]) => (
            <Lane key={name}>
              {SLOTS.map((s) => (
                <Slot key={s} $late={s > 10} $mark={s === 2 || s === 7} style={{ gridColumn: `${s * 2 + 1} / span 2` }} />
              ))}
              {items.map((it) => <LessonCell key={it[0]} item={it} />)}
            </Lane>
          ))}
        </Lanes>
        <SideTrack><Thumb $w={4} $h={205} /></SideTrack>
      </Sheet>
    </Planning>
  );
}

function EmptyWidget({ title }: { title: string }) {
  return (
    <Widget $flat>
      <Head><HeadTitle>{title}</HeadTitle><HeadFill /><Actions open /></Head>
      <Body $clear $h={28} />
    </Widget>
  );
}

const CHANGES: [string, string, string, string][] = [
  ["De 08h10 à 09h05", "801 CPI CPRP", "Cours modifié", "#0000f5"],
  ["De 08h10 à 09h05", "602", "Cours annulé", "#e2001f"],
  ["De 08h10 à 12h05", "[804AP.2]", "Cours annulé", "#e2001f"],
];

export default function App() {
  return (
    <Frame>
      <GlobalStyle />
      <Banner>
        <TitleBar>
          <Butterfly />
          <Title>Client PRONOTE 2025.2.5 (64bit) - LEFRANCOIS Steven en modification - [Base année 2025-2026.not]</Title>
          <WindowButtons>
            <button aria-label="Réduire"><svg width="11" height="11" viewBox="0 0 11 11"><path d="M1 5.500h9" stroke="#fff" strokeWidth="2" /></svg></button>
            <button aria-label="Agrandir"><svg width="11" height="11" viewBox="0 0 11 11" fill="none" stroke="#fff"><path d="M.5 1h10v9.500H.5zM.5 2h10" strokeWidth="1.300" /></svg></button>
            <button aria-label="Quitter"><svg width="11" height="11" viewBox="0 0 11 11" stroke="#fff" strokeWidth="2"><path d="M1.500 1.500l8 8M9.500 1.500l-8 8" /></svg></button>
          </WindowButtons>
        </TitleBar>
        <MenuBar>
          {MENU.map(([label, w, kind]) =>
            kind === "plain"
              ? <PlainItem key={label} $w={w}>{label}</PlainItem>
              : <MenuItem key={label} $w={w} disabled={kind === "off"}>{label}</MenuItem>)}
          <BannerRight>
            <svg width="19" height="12" viewBox="0 0 19 12" fill="none" stroke="#fff" strokeWidth="4"><path d="M2 10.500L9.500 3l7.500 7.500" /></svg>
            <Phone>
              <svg width="14" height="22" viewBox="0 0 14 22" fill="#fff"><path d="M1 3l5-2 1.500 6-2.500 1.500c0 3 1 5.500 2.500 7.500l2-.5 1 5-3.500 1C3 19 0 11 1 3z" /></svg>
              <Badge>3</Badge>
            </Phone>
            <Assist>Assistance</Assist>
          </BannerRight>
        </MenuBar>
      </Banner>

      <Toolbar>
        {TOOLS.map((group, g) => (
          <ToolGroup key={g}>
            {group.map((t) => (
              <Tool key={t} disabled={g < 4} aria-label={t}><svg width="20" height="22" viewBox="0 0 20 22">{TOOL_ART[t]}</svg></Tool>
            ))}
          </ToolGroup>
        ))}
      </Toolbar>

      <TabLine>
        <Tabs>
          <Home aria-label="Accueil"><svg width="18" height="16" viewBox="0 0 18 16" fill="#fff"><path d="M9 0l4 4V1h2v5l3 3-1 1-8-8-8 8-1-1zM9 4l6 6v6h-4v-5H7v5H3v-6z" /></svg></Home>
          {TABS.map(([t, w]) => <Tab key={t} $w={w}>{t}</Tab>)}
        </Tabs>
        <TabTools>
          <svg width="11" height="14" viewBox="0 0 11 14" fill={INK}><path d="M0 1l7 6-7 6zM8 1h2v12H8z" /></svg>
          <svg width="18" height="18" viewBox="0 0 18 18" fill="none" stroke={INK}><circle cx="7.500" cy="7.500" r="6" strokeWidth="2.300" /><path d="M12 12l5 5" strokeWidth="3" /></svg>
          <svg width="17" height="17" viewBox="0 0 17 17" fill={INK}><path d="M8.500 0l2.500 6h6l-5 4 2 6.500-5.500-4-5.500 4L5 10 0 6h6z" /></svg>
          <Pager>
            <button disabled aria-label="Précédent"><svg width="11" height="18" viewBox="0 0 11 18" fill="none" stroke="currentColor" strokeWidth="2"><path d="M10 1L2 9l8 8" /></svg></button>
            <button disabled aria-label="Suivant"><svg width="11" height="18" viewBox="0 0 11 18" fill="none" stroke="currentColor" strokeWidth="2"><path d="M1 1l8 8-8 8" /></svg></button>
          </Pager>
        </TabTools>
      </TabLine>

      <Work>
        <Board>
          <PlanningWidget />

          <Column>
            <Note>
              <Head><HeadTitle>Pense-bête</HeadTitle><HeadFill /><Actions /></Head>
            </Note>
            <Widget>
              <Head><HeadTitle>Cours non assurés des professeurs</HeadTitle><WeekPicker label="Période" next /><HeadFill /><Actions open /></Head>
              <Body $h={54}>
                <Teacher>M. LAGUERRE E.</Teacher>
                <Line>Du 01/09 à 08h10 au 20/09 à 21h25 - Heures remplacées : 1h40 / 16h00</Line>
              </Body>
            </Widget>
            <Widget>
              <Head><HeadTitle>Modif. de l'emploi du temps (20)</HeadTitle><DatePicker width={90} /><HeadFill /><Actions count="+17" /></Head>
              <Body $h={78}>
                <Changes>
                  {CHANGES.map(([when, who, what, color], i) => (
                    <li key={i}>
                      <Square $s={18} aria-label="Détail"><Shirt /></Square>
                      <span><b>{when}</b> - {who} - <Status $c={color}>{what}</Status></span>
                    </li>
                  ))}
                </Changes>
              </Body>
            </Widget>
            <Widget $flat>
              <Head><HeadTitle>Absences des personnels</HeadTitle><WeekPicker label="Période" next /><HeadFill /><Actions /></Head>
              <Body $clear $h={28} />
            </Widget>
            <Widget $flat>
              <Head><HeadTitle>Incidents</HeadTitle><WeekPicker label="Période" /><HeadFill /><Actions open /></Head>
              <Body $clear $h={28} />
            </Widget>
            <Widget>
              <Head><HeadTitle>Données de la vie scolaire</HeadTitle><WeekPicker label="Période" /><HeadFill /><Actions /></Head>
              <Body $h={238}><WeekTable rows={LIFE} /></Body>
            </Widget>
            <Widget>
              <Head><HeadTitle>Données des professeurs</HeadTitle><WeekPicker label="Période" /><HeadFill /><Actions /></Head>
              <Body $h={138}><WeekTable rows={STAFF} /></Body>
            </Widget>
            <Widget $flat>
              <Head><HeadTitle>Exclusions temporaires ou définitives</HeadTitle><WeekPicker label="Période" next /><HeadFill /><Actions open /></Head>
            </Widget>
          </Column>

          <Column>
            <Widget>
              <Head>
                <HeadTitle>Activation et état des connexions</HeadTitle><HeadFill />
                <HeadActions><Square $s={20} aria-label="Actualiser"><Refresh /></Square><Square aria-label="Fermer"><Cross /></Square></HeadActions>
              </Head>
              <Body $h={231}>
                <StateTable>
                  <colgroup><col width="103" /><col width="30" /><col width="30" /><col width="28" /><col width="30" /><col /></colgroup>
                  <thead><tr><th /><th><Butterfly /></th><th><BlueMark /></th><th /><th><NetMark /></th><th /></tr></thead>
                  <tbody>
                    {LINKS.map((r) => (
                      <tr key={r.name}>
                        <th scope="row">{r.name}</th><td>{r.a}</td><td>{r.b}</td>
                        <td>{r.mid && <Globe ok />}</td><td>{r.n}</td>
                        <td><Inline><Globe ok={r.ok} />{r.note}</Inline></td>
                      </tr>
                    ))}
                  </tbody>
                </StateTable>
              </Body>
            </Widget>
            <EmptyWidget title="Liens et numéros utiles" />
            <Widget>
              <Head><HeadTitle>Interconnexion</HeadTitle><HeadFill /><Actions /></Head>
              <Body $h={87}>
                <Cas><b>CAS</b><Solve>Résoudre les problèmes</Solve></Cas>
                <Detail>47 utilisateurs rencontrent des échecs d'identification sur l'ENT</Detail>
                <Group>EduConnect</Group>
              </Body>
            </Widget>
            <Widget>
              <Head><HeadTitle>E-SIDOC</HeadTitle><HeadFill /><Actions open /></Head>
              <SearchRow>
                <SearchBox aria-label="E-SIDOC" placeholder="Tout pour lire ou travailler" />
                <Square $s={20} type="button" aria-label="Rechercher">
                  <svg width="18" height="18" viewBox="0 0 18 18" fill="none" stroke="#6a6a6a"><circle cx="7" cy="7" r="5.500" strokeWidth="1.800" fill="#f6f6f6" /><path d="M11 11l6 5" strokeWidth="3.500" /></svg>
                </Square>
              </SearchRow>
            </Widget>
            <Widget>
              <Head><HeadTitle>Supervision des manuels numériques</HeadTitle><HeadFill /><Actions open /></Head>
              <Body $h={28} />
            </Widget>
            <EmptyWidget title="Agenda" />
            <EmptyWidget title="Informations et sondages" />
            <EmptyWidget title="Discussions" />
            <EmptyWidget title="Casier numérique" />
            <Widget>
              <Head><HeadTitle>Demandes de travaux (12)</HeadTitle><HeadFill /><Actions count="+9" open /></Head>
              <Body $h={96}>
                <JobTable>
                  <colgroup><col width="258" /><col width="95" /><col /></colgroup>
                  <tbody>
                    <tr>
                      <td>Demandé par M. BECK (GESTIONNAIRE) le 1 sept.<p>Carrelage et lavabo chambre 422</p></td>
                      <td>Internat filles coté LOBAU</td><td>Réparation</td>
                    </tr>
                    <tr>
                      <td>Demandé par M. WENNER (CPE) le 1 sept.<p>Crémaillère porte vie scolaire à refixer et consolider.Merci</p></td>
                      <td /><td>Réparation</td>
                    </tr>
                  </tbody>
                </JobTable>
              </Body>
            </Widget>
          </Column>
        </Board>
        <Settings><Square $s={20} aria-label="Paramètres"><Gear /></Square></Settings>
        <Track><Thumb $w={2} $h={560} /></Track>
      </Work>
    </Frame>
  );
}
